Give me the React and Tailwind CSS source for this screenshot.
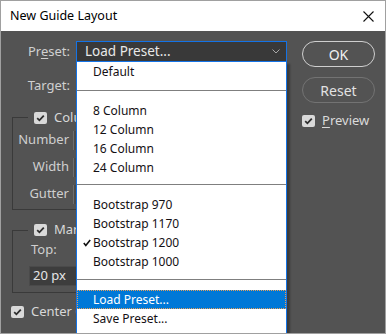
const FONT = 'font-["Noto_Sans","Open_Sans",sans-serif]';

function CheckBox() {
  return (
    <span className="w-[13px] h-[12px] rounded-[2px] bg-[#d9d9d9] flex items-center justify-center shrink-0">
      <svg width="9" height="8" viewBox="0 0 9 8">
        <polyline points="1.2,4.2 3.4,6.3 7.8,1.6" fill="none" stroke="#2e2e2e" strokeWidth="1.8" />
      </svg>
    </span>
  );
}

function MenuItem({ label, checked }) {
  return (
    <div className="relative h-[19px] flex items-center pl-[16px] text-[12px] text-[#141014]">
      {checked && (
        <svg className="absolute left-[6px] top-[6px]" width="8" height="8" viewBox="0 0 8 8">
          <polyline points="0.8,4 2.8,6.4 7.2,1" fill="none" stroke="#111" strokeWidth="1.6" />
        </svg>
      )}
      {label}
    </div>
  );
}

function Separator({ top = 'mt-[9px]' }) {
  return <div className={`${top} mb-[10px] h-px bg-[#7f7f7f]`} />;
}

function FieldRow({ label }) {
  return (
    <div className="flex items-center h-[20px]">
      <span className="w-[56px] shrink-0 text-right text-[13px] text-[#cfcfcf]">{label}</span>
      <span className="ml-[4px] w-[60px] shrink-0 h-[19px] bg-[#4a4a4a] border-l border-[#6e6e6e]" />
    </div>
  );
}

export default function App() {
  return (
    <div className={`w-[386px] h-[334px] border border-[#a0a0a0] flex flex-col overflow-hidden ${FONT}`}>
      {/* title bar */}
      <div className="h-[30px] bg-white flex items-center justify-between pl-[9px] pr-[11px] shrink-0">
        <span className="text-[12.5px] text-black">New Guide Layout</span>
        <svg width="11" height="11" viewBox="0 0 11 11">
          <path d="M0.5 0.5 L10.5 10.5 M10.5 0.5 L0.5 10.5" stroke="#111" strokeWidth="1.1" />
        </svg>
      </div>

      {/* body */}
      <div className="flex-1 bg-[#535353] flex pt-[10px]">
        {/* left column */}
        <div className="w-[300px] pl-[11px] flex flex-col">
          <div className="flex items-center h-[21px]">
            <span className="w-[58px] shrink-0 text-right text-[13px] text-[#d0d0d0]">
              Pr<span className="underline underline-offset-2">e</span>set:
            </span>
            <div className="relative ml-[6px] w-[211px] shrink-0 h-[21px] bg-[#393939] border border-[#1473e6] flex items-center justify-between pl-[8px] pr-[6px] z-10">
              <span className="text-[13.5px] text-[#e8e8e8]">Load Preset...</span>
              <svg width="8" height="5" viewBox="0 0 8 5">
                <polyline points="0.5,0.5 4,4 7.5,0.5" fill="none" stroke="#a8a8a8" strokeWidth="1" />
              </svg>

              {/* open dropdown */}
              <div className="absolute left-[-1px] top-[20px] w-[211px] h-[275px] bg-white border-x border-[#1473e6] shadow-[3px_2px_2px_rgba(0,0,0,0.3)]">
                <MenuItem label="Default" />
                <Separator />
                <MenuItem label="8 Column" />
                <MenuItem label="12 Column" />
                <MenuItem label="16 Column" />
                <MenuItem label="24 Column" />
                <Separator top="mt-[7px]" />
                <MenuItem label="Bootstrap 970" />
                <MenuItem label="Bootstrap 1170" />
                <MenuItem label="Bootstrap 1200" checked />
                <MenuItem label="Bootstrap 1000" />
                <Separator top="mt-[8px]" />
                <div className="h-[19px] flex items-center pl-[15px] text-[12px] text-white bg-[#0078d7] border border-dotted border-[#e8a05a]">
                  Load Preset...
                </div>
                <MenuItem label="Save Preset..." />
              </div>
            </div>
          </div>

          <div className="flex items-center h-[21px] mt-[13px]">
            <span className="w-[58px] text-right text-[13px] text-[#d0d0d0]">Target:</span>
          </div>

          {/* columns group */}
          <div className="relative mt-[21px] w-[90px] border border-r-0 border-[#3a3a3a] pt-[12px] pb-[5px] flex flex-col gap-[7px]">
            <div className="absolute -top-[7px] left-[15px] bg-[#535353] px-[6px] flex items-center gap-[7px]">
              <CheckBox />
              <span className="text-[13px] text-[#d8d8d8] leading-none">Columns</span>
            </div>
            <FieldRow label="Number" />
            <FieldRow label="Width" />
            <FieldRow label="Gutter" />
          </div>

          {/* margin group */}
          <div className="relative mt-[20px] w-[90px] border border-r-0 border-[#3a3a3a] pt-[11px] pb-[6px] pl-[16px]">
            <div className="absolute -top-[8px] left-[15px] bg-[#535353] px-[6px] flex items-center gap-[7px]">
              <CheckBox />
              <span className="text-[13px] text-[#d8d8d8] leading-none">Margin</span>
            </div>
            <div className="h-[16px] flex items-center pl-[2px] text-[13px] text-[#cfcfcf]">Top:</div>
            <div className="mt-[8px] h-[20px] bg-[#3d3d3d] border border-[#4a4a4a] flex items-center pl-[3px] text-[13px] text-[#e6e6e6]">
              20 px
            </div>
          </div>

          <div className="mt-[12px] -ml-[1px] flex items-center gap-[7px] h-[13px]">
            <CheckBox />
            <span className="text-[13px] text-[#d8d8d8]">Center Guides</span>
          </div>
        </div>

        {/* right column */}
        <div className="ml-[1px] w-[73px] flex flex-col">
          <button className="h-[26px] rounded-full border-[1.5px] border-[#cfcfcf] text-[14px] text-[#f0f0f0]">OK</button>
          <button className="mt-[10px] h-[26px] rounded-full border-[1.5px] border-[#737373] text-[14px] text-[#e2e2e2]">Reset</button>
          <div className="mt-[8px] flex items-center gap-[7px]">
            <CheckBox />
            <span className="text-[13px] text-[#dadada]">
              <span className="underline underline-offset-2">P</span>review
            </span>
          </div>
        </div>
      </div>
    </div>
  );
}
